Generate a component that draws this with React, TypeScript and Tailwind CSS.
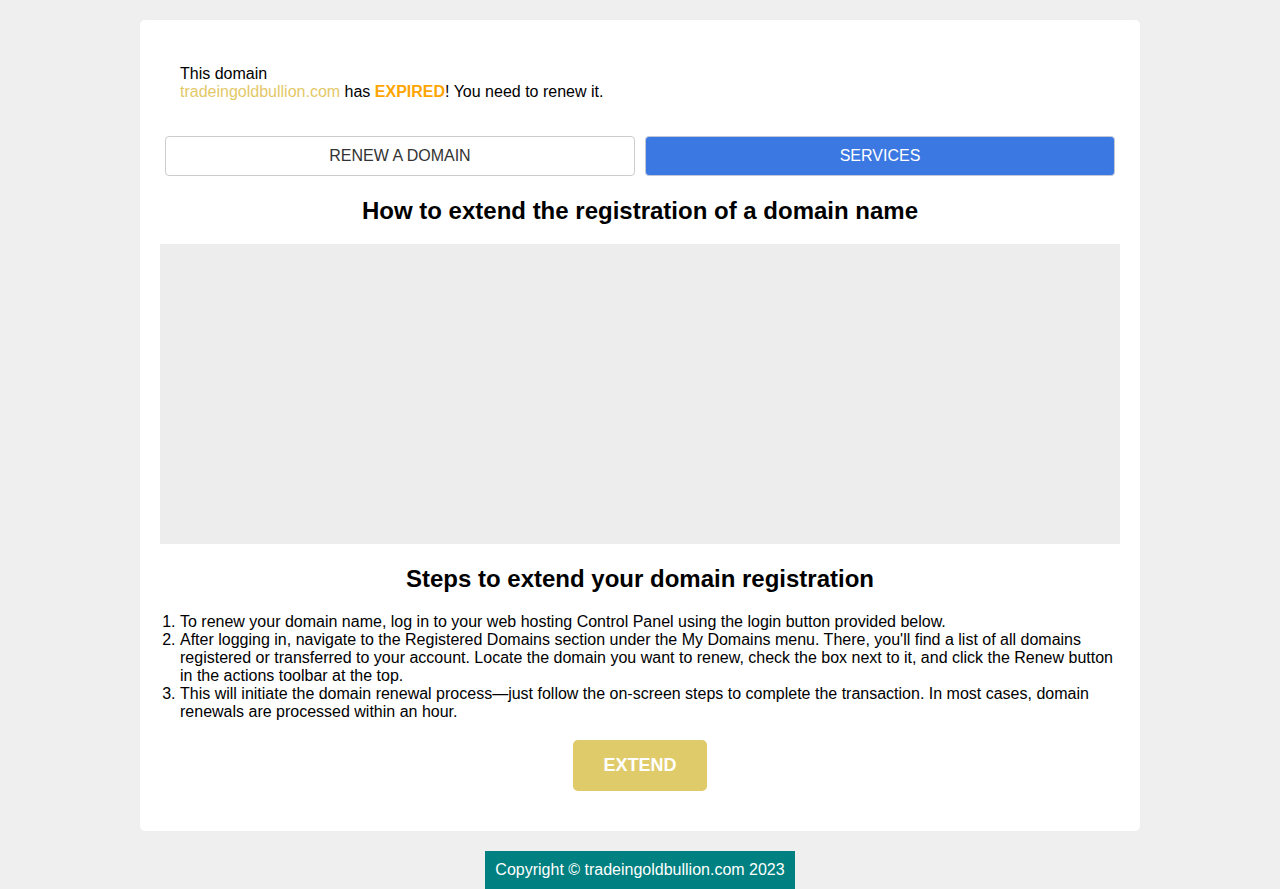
export default function App() {
  return (
    <div
      className="min-h-[889px] bg-[#efefef] pt-5 text-black"
      style={{ fontFamily: '"Liberation Sans", Arial, sans-serif' }}
    >
      <div className="mx-auto w-[1000px] rounded-[5px] bg-white p-5">
        <div className="px-5 pt-[25px] pb-[35px] text-[16px] leading-[18px]">
          <div>This domain</div>
          <div>
            <span className="text-[#e3c868]">tradeingoldbullion.com</span> has{' '}
            <span className="font-bold text-[#ffa500]">EXPIRED</span>! You need to renew it.
          </div>
        </div>
        <div className="flex gap-[10px] px-[5px]">
          <div className="flex h-10 flex-1 items-center justify-center rounded-[4px] border border-[#cccccc] bg-white text-[16px] text-[#333333]">
            RENEW A DOMAIN
          </div>
          <div className="flex h-10 flex-1 items-center justify-center rounded-[4px] border border-[#c0c8d8] bg-[#3c78e2] text-[16px] text-white">
            SERVICES
          </div>
        </div>
        <h1 className="mt-[21px] mb-[19px] text-center text-[24px] font-bold leading-[28px]">
          How to extend the registration of a domain name
        </h1>
        <div className="h-[300px] w-full bg-[#ededed]" />
        <h2 className="mt-[21px] mb-5 text-center text-[24px] font-bold leading-[28px]">
          Steps to extend your domain registration
        </h2>
        <ol className="list-decimal pl-5 text-[16px] leading-[18px]">
          <li>
            To renew your domain name, log in to your web hosting Control Panel using the login button provided below.
          </li>
          <li>
            After logging in, navigate to the Registered Domains section under the My Domains menu. There, you'll find a list of all domains registered or transferred to your account. Locate the domain you want to renew, check the box next to it, and click the Renew button in the actions toolbar at the top.
          </li>
          <li>
            This will initiate the domain renewal process—just follow the on-screen steps to complete the transaction. In most cases, domain renewals are processed within an hour.
          </li>
        </ol>
        <div className="mt-[19px] mb-5 flex justify-center">
          <div className="flex h-[51px] w-[134px] items-center justify-center rounded-[5px] bg-[#e0cb6a] text-[18px] font-bold text-white">
            EXTEND
          </div>
        </div>
      </div>
      <div className="mt-5 flex justify-center">
        <div className="bg-[#008080] px-[10px] py-[8px] text-[16px] leading-[22px] text-white">
          Copyright © tradeingoldbullion.com 2023
        </div>
      </div>
    </div>
  );
}
